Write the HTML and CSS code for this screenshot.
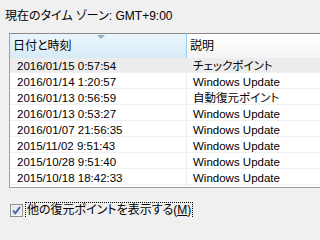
FILE: index.html
```html
<!DOCTYPE html>
<html lang="ja">
<head>
    <meta charset="UTF-8">
    <title>システムの復元</title>
    <link rel="stylesheet" href="styles.css">
</head>
<body>

    <div class="tz">現在のタイム ゾーン: GMT+9:00</div>

    <div class="list">
        <div class="head">
            <div class="hcell sorted">日付と時刻<span class="arrow"></span></div>
            <div class="hcell">説明</div>
        </div>
        <div class="rows">
            <div class="row sel"><span class="date">2016/01/15 0:57:54</span><span class="desc">チェックポイント</span></div>
            <div class="row"><span class="date">2016/01/14 1:20:57</span><span class="desc">Windows Update</span></div>
            <div class="row"><span class="date">2016/01/13 0:56:59</span><span class="desc">自動復元ポイント</span></div>
            <div class="row"><span class="date">2016/01/13 0:53:27</span><span class="desc">Windows Update</span></div>
            <div class="row"><span class="date">2016/01/07 21:56:35</span><span class="desc">Windows Update</span></div>
            <div class="row"><span class="date">2015/11/02 9:51:43</span><span class="desc">Windows Update</span></div>
            <div class="row"><span class="date">2015/10/28 9:51:40</span><span class="desc">Windows Update</span></div>
            <div class="row"><span class="date">2015/10/18 18:42:33</span><span class="desc">Windows Update</span></div>
            <div class="row"><span class="date"></span><span class="desc"></span></div>
        </div>
    </div>

    <label class="more">
        <svg class="box" width="13" height="13" viewBox="0 0 13 13">
            <rect x="0.5" y="0.5" width="12" height="12" fill="#f4f4f4" stroke="#8f8f8f"/>
            <rect x="2" y="2" width="9" height="9" fill="#e6e8ec"/>
            <path d="M3 6.5 L5.3 9.3 L10 3" fill="none" stroke="#4060a8" stroke-width="1.8"/>
        </svg>
        <span class="focus">他の復元ポイントを表示する(<u>M</u>)</span>
    </label>

</body>
</html>
```

FILE: styles.css
```css
body {
    margin: 0;
    background-color: #f0f0f0;
    font-family: "Liberation Sans", "Noto Sans CJK JP", sans-serif;
    font-size: 12px;
    font-feature-settings: "palt";
    color: #000;
    overflow: hidden;
}
.tz {
    padding: 9px 0 0 5px;
    line-height: 14px;
    height: 24px;
}
.list {
    margin-left: 9px;
    margin-right: -6px;
    border: 1px solid #a0a0a0;
    border-top-color: #8a8a8a;
    border-right: none;
    background-color: #fff;
}
.head {
    display: grid;
    grid-template-columns: 177px 1fr;
    height: 22px;
    border-bottom: 1px solid #d5d5d5;
}
.hcell {
    position: relative;
    padding-left: 3px;
    line-height: 24px;
    background: linear-gradient(#ffffff, #f4f4f6);
}
.hcell.sorted {
    background: linear-gradient(#eaf5fc, #d6ebf7);
    border-right: 1px solid #96d1ee;
}
.arrow {
    position: absolute;
    left: 87px;
    top: 1px;
    border-left: 4px solid transparent;
    border-right: 4px solid transparent;
    border-top: 4px solid #9aaec2;
}
.rows {
    height: 130px;
    overflow: hidden;
}
.row {
    display: grid;
    grid-template-columns: 177px 1fr;
    height: 15px;
    border-bottom: 1px solid #f0f0f0;
    line-height: 18px;
    font-size: 11.5px;
}
.row.sel {
    background-color: #ececec;
}
.date {
    padding-left: 7px;
    border-right: 1px solid #ececec;
}
.desc {
    padding-left: 6px;
}
.more {
    display: flex;
    align-items: center;
    gap: 3px;
    margin: 15px 0 0 10px;
}
.focus {
    outline: 1px dotted #000;
    padding: 0 1px;
    line-height: 15px;
}
```
